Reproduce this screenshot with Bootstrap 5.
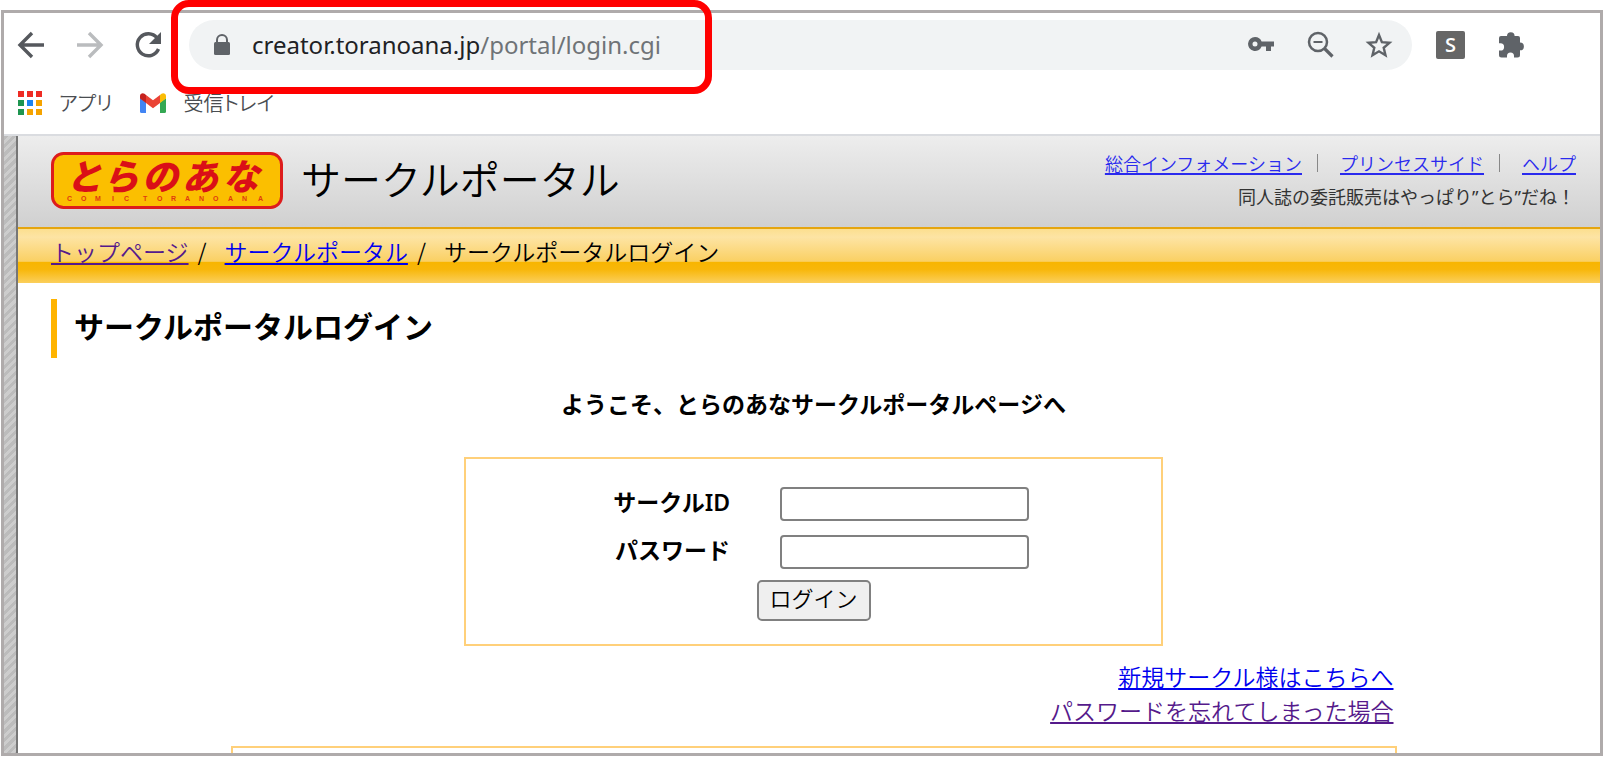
<!DOCTYPE html>
<html lang="ja">
<head>
<meta charset="utf-8">
<meta name="viewport" content="width=device-width, initial-scale=1">
<title>サークルポータルログイン</title>
<link href="https://cdn.jsdelivr.net/npm/bootstrap@5.3.0/dist/css/bootstrap.min.css" rel="stylesheet">
<style>
  body { font-family: "Noto Sans", "Noto Sans CJK JP", sans-serif; color: #000; background: #fff; line-height: 34px; font-size: 23px; }
  a { color: #0000ee; text-underline-offset: 2px; text-decoration-thickness: 2px; }
  a.seen { color: #551a8b; }
  .thin { font-family: "Noto Sans CJK JP", sans-serif; font-weight: 350; }
  .browser { min-height: calc(100vh - 11px); margin: 10px 1px 1px; border: 3px solid #afabab; }
  .toolbar { height: 64px; padding: 0 70px 0 12px; }
  .toolbar svg, .bookmarks svg { display: block; }
  .tool { border: 0; background: none; padding: 0; color: #5f6368; }
  .nav-tools { gap: 26px; padding-right: 25px; }
  .address { height: 50px; border-radius: 25px; background: #f1f3f4; padding: 0 17px 0 23px; gap: 20px; }
  .url { border: 0; background: none; font-family: "Noto Sans", sans-serif; font-size: 24px; line-height: 32px; color: #202124; }
  .url span { color: #6f7377; }
  .address-tools { gap: 27px; }
  .highlight { position: absolute; left: 171px; top: 0; width: 541px; height: 94px; border: 7px solid #f00; border-radius: 18px; pointer-events: none; }
  .bookmarks { height: 59px; padding: 0 14px 6px; gap: 28px; border-bottom: 2px solid #dadce0; }
  .bookmarks a { color: #4a4d51; font-size: 20px; line-height: 30px; font-feature-settings: "palt"; gap: 17px; }
  .side-strip { width: 14px; border-right: 2px solid #767676; background: repeating-linear-gradient(135deg, #bcbcbc 0 3px, #cdcdcd 3px 6px); }
  .site-head { height: 91px; padding: 0 24px 0 33px; background: linear-gradient(#ededed, #d0d0d0); }
  .site-name { font-size: 40px; line-height: 56px; margin: 0; padding-bottom: 5px; }
  .site-logo { gap: 18px; padding-bottom: 2px; }
  .site-links { font-size: 18px; line-height: 34px; padding-top: 10px; }
  .site-links nav { gap: 15px; }
  .site-links i { width: 1px; height: 18px; margin-right: 7px; background: #888; }
  .site-links a { color: #2a2aee; }
  .tagline { color: #333; font-family: "Noto Sans", "Noto Sans CJK JP", sans-serif; padding-right: 1px; }
  .crumbs { height: 56px; padding: 0 33px 10px; border-top: 2px solid #e5a50f; background: linear-gradient(#fcdf8f 0, #fde4a4 15%, #fad063 60%, #f8b500 61%, #f8b70a 75%, #fbcf5c 100%); }
  .crumbs .slash { margin: 0 18px 0 9px; }
  .content { padding: 16px 24px 0 33px; }
  .page-title { border-left: 6px solid #ffb400; padding: 0 0 4px 17px; font-size: 30px; line-height: 55px; font-weight: 700; margin: 0; }
  .welcome { font-size: 23px; line-height: 34px; font-weight: 600; margin: 29px 0 36px; }
  .portal { max-width: 1166px; }
  .login-box { width: 60%; border: 2px solid #ffd07a; padding: 28px 0 23px; }
  .login-grid { display: grid; grid-template-columns: 38% 249px; column-gap: 50px; row-gap: 14px; align-items: center; }
  .login-grid label { text-align: right; font-weight: 600; line-height: 30px; padding-bottom: 4px; }
  .login-grid input { height: 34px; border: 2px solid #808080; border-radius: 4px; background: #fff; padding: 0 6px; }
  .login-btn { height: 41px; width: 114px; border: 2px solid #808080; border-radius: 5px; background: #efefef; color: #000; font-size: 22px; line-height: 30px; margin-top: 11px; padding: 0 0 7px; }
  .help-links { margin: 13px 3px 19px 0; }
  .notice { border: 2px solid #ffd07a; border-bottom: 0; min-height: 7px; }
</style>
</head>
<body>
<div class="browser d-flex flex-column">
  <div class="toolbar d-flex align-items-center">
    <div class="nav-tools d-flex">
      <button class="tool" aria-label="戻る"><svg width="32" height="32" viewBox="0 0 32 32" fill="none" stroke="#55585d" stroke-width="3.4"><path d="M28 16H5M16 4 4 16l12 12"/></svg></button>
      <button class="tool" aria-label="進む"><svg width="32" height="32" viewBox="0 0 32 32" fill="none" stroke="#babcbe" stroke-width="3.4"><path d="M3 16h23M15 4l12 12-12 12"/></svg></button>
      <button class="tool" aria-label="再読み込み"><svg width="32" height="32" viewBox="0 0 32 32"><path d="M26.5 20A11 11 0 1 1 25 9" fill="none" stroke="#55585d" stroke-width="3.4"/><path d="M29 3v12H17z" fill="#55585d"/></svg></button>
    </div>
    <div class="address d-flex align-items-center flex-grow-1">
      <svg width="20" height="24" viewBox="0 0 20 24"><path d="M5 10V7a5 5 0 0 1 10 0v3" fill="none" stroke="#5f6368" stroke-width="2"/><rect x="2" y="9" width="16" height="13" rx="1.5" fill="#5f6368"/></svg>
      <div class="url flex-grow-1">creator.toranoana.jp<span>/portal/login.cgi</span></div>
      <div class="address-tools d-flex">
        <button class="tool" aria-label="パスワード"><svg width="32" height="32" viewBox="0 0 32 32"><path fill="#5f6368" fill-rule="evenodd" d="M10 8a7 7 0 1 0 6.600 9.500H21V22h5v-4.500h3v-5H16.600A7 7 0 0 0 10 8Zm0 4.500a2.500 2.500 0 1 1 0 5 2.500 2.500 0 0 1 0-5Z"/></svg></button>
        <button class="tool" aria-label="ズーム"><svg width="32" height="32" viewBox="0 0 32 32" fill="none" stroke="#5f6368"><circle cx="14" cy="13" r="9" stroke-width="2.500"/><path d="M9.500 13h9" stroke-width="2"/><path d="m20.500 19.500 8 8" stroke-width="3.200"/></svg></button>
        <button class="tool" aria-label="ブックマーク"><svg width="32" height="32" viewBox="0 0 32 32" fill="none" stroke="#5f6368" stroke-width="2.400"><path d="m16 6 2.900 7.200 7.600.600-5.800 5 1.800 7.500-6.500-4-6.500 4 1.800-7.500-5.800-5 7.600-.600z"/></svg></button>
      </div>
    </div>
    <div class="d-flex align-items-center ms-4">
      <button class="tool" aria-label="拡張機能 S"><svg width="30" height="30" viewBox="0 0 30 30"><rect y="1" width="29" height="28" rx="2" fill="#666"/><text x="14.500" y="22" text-anchor="middle" font-family="Open Sans" font-size="20" font-weight="600" fill="#fff">S</text></svg></button>
      <button class="tool ms-4 ps-1" aria-label="拡張機能"><svg width="36" height="32" viewBox="0 0 36 32"><path fill="#5f6368" d="M13 7a3.800 3.800 0 0 1 7.600 0H24a2 2 0 0 1 2 2v4.500a3.900 3.900 0 0 1 0 7.800V26a2.500 2.500 0 0 1-2.500 2.500h-3.500v-1.500a3.500 3.500 0 0 0-7 0v1.500H7.500A2.500 2.500 0 0 1 5 26v-4.500h1.500a3.600 3.600 0 0 0 0-7.200H5V9a2 2 0 0 1 2-2z"/></svg></button>
    </div>
  </div>
  <nav class="bookmarks d-flex align-items-center">
    <a href="#" class="thin d-flex align-items-center text-decoration-none"><svg width="24" height="24" viewBox="0 0 24 24"><path fill="#ee2b24" d="M0 0h6v6H0zM9 0h6v6H9zM18 0h6v6h-6z"/><path fill="#1e9550" d="M0 9h6v6H0zM0 18h6v6H0z"/><path fill="#1a83f0" d="M9 9h6v6H9z"/><path fill="#f5a300" d="M18 9h6v6h-6zM9 18h6v6H9zM18 18h6v6h-6z"/></svg>アプリ</a>
    <a href="#" class="thin d-flex align-items-center text-decoration-none"><svg width="26" height="20" viewBox="0 0 26 20"><path fill="#4285f4" d="M0 5l6 4.500V20H1.500A1.500 1.500 0 0 1 0 18.500z"/><path fill="#34a853" d="M26 5l-6 4.500V20h4.500a1.500 1.500 0 0 0 1.500-1.500z"/><path fill="#fbbc04" d="M20 2v8l6-4.500V3c0-2.800-3-3.500-4.500-2.200z"/><path fill="#ea4335" d="M6 2l7 5.300L20 2v8l-7 5.300L6 10z"/><path fill="#c5221f" d="M0 3v2.500L6 10V2L4.500.8C3-.5 0 .2 0 3z"/></svg>受信トレイ</a>
  </nav>
  <div class="d-flex flex-grow-1">
    <div class="side-strip flex-shrink-0"></div>
    <div class="flex-grow-1 d-flex flex-column">
      <header class="site-head d-flex justify-content-between">
        <div class="site-logo d-flex align-items-center">
          <svg width="232" height="57" viewBox="0 0 232 57" role="img" aria-label="とらのあな COMIC TORANOANA">
            <rect x="1.500" y="1.500" width="229" height="54" rx="11" fill="#fbbf00" stroke="#dd1c1c" stroke-width="3"/>
            <text x="15 52 91 131 172" y="38" font-family="Noto Sans CJK JP" font-size="36" font-weight="900" font-style="italic" fill="#da0f17">とらのあな</text>
            <text x="16 30 44 61 73 84 92 106 120 134 148 162 177 191 207" y="49" font-family="Liberation Sans" font-size="7" font-weight="700" fill="#e03a10">COMIC TORANOANA</text>
          </svg>
          <p class="site-name thin">サークルポータル</p>
        </div>
        <div class="site-links text-end">
          <nav class="d-flex align-items-center justify-content-end thin"><a href="#">総合インフォメーション</a><i></i><a href="#">プリンセスサイド</a><i></i><a href="#">ヘルプ</a></nav>
          <div class="tagline">同人誌の委託販売はやっぱり”とら”だね！</div>
        </div>
      </header>
      <nav class="crumbs thin d-flex align-items-center"><a href="#" class="seen">トップページ</a><span class="slash">/</span><a href="#">サークルポータル</a><span class="slash">/</span><span>サークルポータルログイン</span></nav>
      <main class="content flex-grow-1 d-flex flex-column">
        <h1 class="page-title">サークルポータルログイン</h1>
        <p class="welcome text-center">ようこそ、とらのあなサークルポータルページへ</p>
        <div class="portal w-100 mx-auto flex-grow-1 d-flex flex-column">
          <form class="login-box mx-auto">
            <div class="login-grid">
              <label for="circle-id">サークルID</label><input type="text" id="circle-id">
              <label for="circle-pass">パスワード</label><input type="password" id="circle-pass">
            </div>
            <div class="d-flex justify-content-center"><button type="button" class="login-btn thin">ログイン</button></div>
          </form>
          <div class="help-links text-end thin"><a href="#">新規サークル様はこちらへ</a><br><a href="#" class="seen">パスワードを忘れてしまった場合</a></div>
          <section class="notice flex-grow-1"></section>
        </div>
      </main>
    </div>
  </div>
</div>
<div class="highlight"></div>
<script src="https://cdn.jsdelivr.net/npm/bootstrap@5.3.0/dist/js/bootstrap.bundle.min.js"></script>
</body>
</html>
